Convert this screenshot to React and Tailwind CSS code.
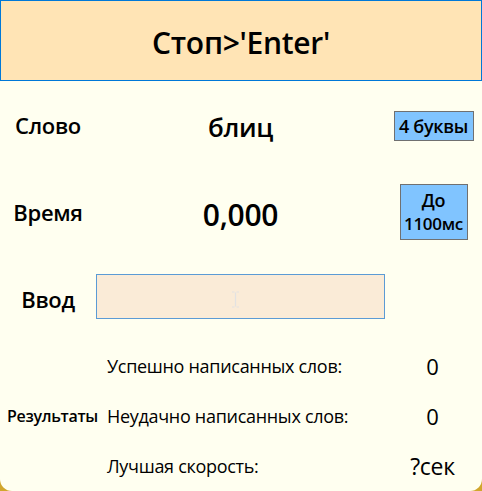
import React from 'react';

const font = { fontFamily: '"Open Sans", "Noto Sans", sans-serif' };

const App = () => {
    return (
        <div className="w-[482px] h-[491px] bg-[#d1a62c] overflow-hidden" style={font}>
            <div className="h-full bg-[#fffff0] rounded-b-[12px] flex flex-col text-black">
                {/* Header */}
                <div className="h-[84px] bg-[#ffe4b5] border border-[#0078d7] flex items-center justify-center">
                    <span className="text-[30px] font-semibold tracking-[-0.3px] pt-1">Стоп&gt;'Enter'</span>
                </div>

                {/* Main rows */}
                <div className="grid grid-cols-[96px_289px_97px] grid-rows-[85px_85px_85px]">
                    <div className="flex items-center justify-center text-[22px] font-semibold tracking-[-0.3px] pt-1">Слово</div>
                    <div className="flex items-center justify-center text-[26px] font-semibold tracking-[-0.3px] pt-2">блиц</div>
                    <div className="flex items-center justify-center pt-1">
                        <button className="w-[80px] h-[30px] bg-[#80c4ff] border border-[#707070] text-[18px] font-semibold tracking-[-0.3px] leading-none">
                            4 буквы
                        </button>
                    </div>

                    <div className="flex items-center justify-center text-[22px] font-semibold tracking-[-0.3px] pt-2">Время</div>
                    <div className="flex items-center justify-center text-[30px] font-semibold tracking-[-0.3px] pt-3">0,000</div>
                    <div className="flex items-center justify-center pt-[6px]">
                        <button className="w-[68px] h-[56px] bg-[#80c4ff] border border-[#707070] text-[17px] font-semibold tracking-[-0.3px] leading-[23px] flex flex-col items-center justify-center">
                            <span className="text-[18px]">До</span>
                            <span>1100мс</span>
                        </button>
                    </div>

                    <div className="flex items-center justify-center text-[22px] font-semibold tracking-[-0.3px] pt-3">Ввод</div>
                    <div className="flex items-center pt-[6px]">
                        <div className="w-[290px] h-[45px] bg-[#faebd7] border border-[#5b9bd5] flex items-center justify-center">
                            <svg width="9" height="17" viewBox="0 0 9 17" className="ml-[-10px] mt-[6px]">
                                <path d="M1 1h2.5M5.5 1H8M4.5 1.5v14M1 16h2.5M5.5 16H8" stroke="#e2e2e2" strokeWidth="1.2" fill="none" />
                            </svg>
                        </div>
                    </div>
                    <div />
                </div>

                {/* Results */}
                <div className="flex-1 grid grid-cols-[103px_280px_99px] grid-rows-[50px_50px_50px] pt-[5px]">
                    <div className="row-span-3 flex items-center justify-center text-[16px] font-semibold tracking-[-0.3px] pl-[2px]">Результаты</div>
                    <div className="flex items-center pl-[4px] text-[18px] tracking-[-0.3px]">Успешно написанных слов:</div>
                    <div className="flex items-center justify-center text-[22px]">0</div>
                    <div className="flex items-center pl-[4px] text-[18px] tracking-[-0.3px]">Неудачно написанных слов:</div>
                    <div className="flex items-center justify-center text-[22px]">0</div>
                    <div className="flex items-center pl-[4px] text-[18px] tracking-[-0.3px]">Лучшая скорость:</div>
                    <div className="flex items-center justify-center text-[23px] tracking-[-0.3px]">?сек</div>
                </div>
            </div>
        </div>
    );
};

export default App;
